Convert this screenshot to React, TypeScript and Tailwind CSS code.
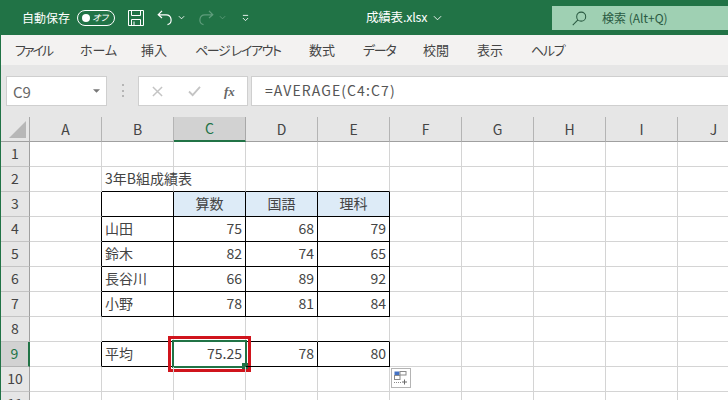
import React from 'react';

const columns = ['A', 'B', 'C', 'D', 'E', 'F', 'G', 'H', 'I', 'J'];
const rowNumbers = [1, 2, 3, 4, 5, 6, 7, 8, 9, 10, 11];

const values: Record<string, string> = {
  B2: '3年B組成績表',
  C3: '算数', D3: '国語', E3: '理科',
  B4: '山田', C4: '75', D4: '68', E4: '79',
  B5: '鈴木', C5: '82', D5: '74', E5: '65',
  B6: '長谷川', C6: '66', D6: '89', E6: '92',
  B7: '小野', C7: '78', D7: '81', E7: '84',
  B9: '平均', C9: '75.25', D9: '78', E9: '80',
};

const tabs = [
  { label: 'ファイル', className: 'w-[37px] tracking-[-2px]' },
  { label: 'ホーム', className: 'w-[33px]' },
  { label: '挿入', className: 'w-[26px]' },
  { label: 'ページ レイアウト', className: 'w-[86px] tracking-[-1.4px]' },
  { label: '数式', className: 'w-[26px]' },
  { label: 'データ', className: 'w-[32px] tracking-[-1.3px]' },
  { label: '校閲', className: 'w-[26px]' },
  { label: '表示', className: 'w-[26px]' },
  { label: 'ヘルプ', className: 'w-[32px] tracking-[-1.3px]' },
];

const inTable = (col: string, row: number) =>
  ['B', 'C', 'D', 'E'].includes(col) && ((row >= 3 && row <= 7) || row === 9);

const Cell: React.FC<{ col: string; row: number }> = ({ col, row }) => {
  const id = `${col}${row}`;
  const text = values[id];
  const next = columns[columns.indexOf(col) + 1];
  const blackRight = inTable(col, row) || (next ? inTable(next, row) : false);
  const blackBottom = inTable(col, row) || inTable(col, row + 1);
  const isHead = row === 3 && ['C', 'D', 'E'].includes(col);
  const isNumber = text !== undefined && /^[\d.]+$/.test(text);

  return (
    <div
      className={`relative flex items-center border-r border-b px-[3px] pb-[3px] whitespace-nowrap text-[14px] leading-none text-[#444] ${
        blackRight ? 'border-r-black' : 'border-r-[#d4d4d4]'
      } ${blackBottom ? 'border-b-black' : 'border-b-[#d4d4d4]'} ${isHead ? 'justify-center bg-[#ddebf7]' : ''} ${
        isNumber ? 'justify-end' : ''
      }`}
    >
      {text}
      {id === 'C9' && (
        <>
          <div className="absolute -top-[6px] -left-[6px] -right-[6px] -bottom-[6px] border-[3px] border-[#d0141c]" />
          <div className="absolute -top-[2px] -left-[2px] -right-[2px] -bottom-[2px] border-2 border-[#217346]" />
          <div className="absolute -right-[3px] -bottom-[3px] h-[6px] w-[6px] bg-[#217346]" />
        </>
      )}
      {id === 'F10' && (
        <div className="absolute top-[1px] left-[1px] z-10 h-[20px] w-[20px] border border-[#b4b4b4] bg-white p-[2px]">
          <svg viewBox="0 0 14 14" className="h-full w-full">
            <rect x="0.5" y="0.5" width="5" height="3.5" fill="#4472c4" />
            <rect x="6" y="0.5" width="6" height="3.5" fill="#fff" stroke="#8a8a8a" />
            <rect x="0.5" y="4.5" width="5.5" height="4" fill="#fff" stroke="#8a8a8a" />
            <path d="M0 11.5h7" stroke="#8a8a8a" strokeDasharray="1 1" />
            <path d="M10.5 8.5v5M8 11h5" stroke="#6a6a6a" />
          </svg>
        </div>
      )}
    </div>
  );
};

const App: React.FC = () => {
  return (
    <div className="h-[400px] w-[728px] overflow-hidden bg-white font-['Noto_Sans_CJK_JP','Noto_Sans',sans-serif]">
      {/* Title bar */}
      <div className="relative flex h-[35px] items-center bg-[#217346] text-white">
        <span className="ml-[22px] text-[12px]">自動保存</span>
        <div className="ml-[7px] flex h-[16px] w-[38px] items-center justify-between rounded-full border border-white pr-[6px] pl-[4px]">
          <span className="h-[8px] w-[8px] rounded-full bg-white" />
          <span className="text-[9px] leading-none italic [font-feature-settings:'palt']">オフ</span>
        </div>
        <svg viewBox="0 0 16 16" className="ml-[13px] h-[16px] w-[16px]" fill="none" stroke="#fff" strokeWidth="1">
          <path d="M.5.5h15v15H.5zM3.5.5v5h9v-5M3.5 15.5v-6h9v6M6 11.5v4" />
        </svg>
        <svg viewBox="0 0 16 16" className="ml-[13px] h-[16px] w-[16px]" fill="none" stroke="#fff" strokeWidth="1.2">
          <path d="M5 .8 1.2 4.8 5 8M1.2 4.8H9a5 5 0 0 1 1.5 9.8" />
        </svg>
        <svg viewBox="0 0 8 5" className="ml-[5px] h-[5px] w-[7px]" fill="none" stroke="#fff">
          <path d="m1 1 3 3 3-3" />
        </svg>
        <svg viewBox="0 0 16 16" className="ml-[13px] h-[16px] w-[16px]" fill="none" stroke="#5f9d7c" strokeWidth="1.2">
          <path d="M11 .8l3.8 4L11 8M14.8 4.8H7a5 5 0 0 0-1.5 9.8" />
        </svg>
        <svg viewBox="0 0 8 5" className="ml-[5px] h-[5px] w-[7px]" fill="none" stroke="#5f9d7c">
          <path d="m1 1 3 3 3-3" />
        </svg>
        <svg viewBox="0 0 8 8" className="ml-[16px] h-[8px] w-[7px]" fill="none" stroke="#fff">
          <path d="M1 1h6M1 4l3 3 3-3" />
        </svg>
        <div className="ml-[117px] flex items-center">
          <span className="text-[12.5px] tracking-[-0.2px]">成績表.xlsx</span>
          <svg viewBox="0 0 10 6" className="ml-[6px] h-[6px] w-[9px]" fill="none" stroke="#fff">
            <path d="m1 1 4 4 4-4" />
          </svg>
        </div>
        <div className="absolute top-[6px] right-0 flex h-[24px] w-[176px] items-center bg-[#9fd0b3] pl-[20px] text-[#2a5a42]">
          <svg viewBox="0 0 16 16" className="h-[15px] w-[15px]" fill="none" stroke="#2a5a42" strokeWidth="1.1">
            <circle cx="9.8" cy="6" r="4.8" />
            <path d="M6.3 9.5.8 15" />
          </svg>
          <span className="ml-[15px] text-[12px]">検索 (Alt+Q)</span>
        </div>
      </div>

      <div className="border-l border-l-[#217346]">
        {/* Ribbon tabs */}
        <div className="flex h-[30px] items-center gap-[28px] bg-[#f3f2f1] pl-[14px] text-[13px] text-[#444] [font-feature-settings:'palt']">
          {tabs.map((tab) => (
            <span key={tab.label} className={`whitespace-nowrap ${tab.className}`}>
              {tab.label}
            </span>
          ))}
        </div>

        {/* Formula bar */}
        <div className="flex h-[52px] items-start bg-[#e6e6e6] pt-[11px] pl-[5px]">
          <div className="flex h-[30px] w-[101px] items-center justify-between border border-[#cfcfcf] bg-white pr-[6px] pl-[6px] text-[15px] text-[#666]">
            <span className="mt-[3px]">C9</span>
            <svg viewBox="0 0 8 4" className="h-[4px] w-[7px]">
              <path d="M0 0h8L4 4z" fill="#777" />
            </svg>
          </div>
          <div className="ml-[15px] mt-[8px] flex h-[13px] w-[2px] flex-col justify-between">
            <span className="h-[2px] w-[2px] bg-[#b5b5b5]" />
            <span className="h-[2px] w-[2px] bg-[#b5b5b5]" />
            <span className="h-[2px] w-[2px] bg-[#b5b5b5]" />
          </div>
          <div className="ml-[14px] flex h-[30px] w-[110px] items-center border border-[#cfcfcf] bg-white pl-[13px]">
            <svg viewBox="0 0 12 12" className="h-[11px] w-[11px]" fill="none" stroke="#c4c4c4" strokeWidth="1.6">
              <path d="m1 1 10 10M11 1 1 11" />
            </svg>
            <svg viewBox="0 0 14 12" className="ml-[25px] h-[11px] w-[13px]" fill="none" stroke="#c4c4c4" strokeWidth="2">
              <path d="m1 6 4 4 8-9" />
            </svg>
            <span className="ml-[23px] font-['Liberation_Serif',serif] text-[13px] font-bold italic leading-none text-[#666]">fx</span>
          </div>
          <div className="ml-[3px] flex h-[30px] flex-1 items-center border border-r-0 border-[#cfcfcf] bg-white pb-[1px] pl-[13px] text-[14px] tracking-[1.1px] text-[#555]">
            =AVERAGE(C4:C7)
          </div>
        </div>

        {/* Sheet */}
        <div className="grid grid-cols-[29px_repeat(10,72px)] grid-rows-[25px_repeat(11,25px)] overflow-hidden">
          <div className="flex items-end justify-end border-r border-b border-r-[#a8a8a8] border-b-[#a0a0a0] bg-[#e6e6e6] pr-[3px] pb-[3px]">
            <svg viewBox="0 0 17 17" className="h-[17px] w-[17px]">
              <path d="M17 0v17H0z" fill="#b7b7b7" />
            </svg>
          </div>
          {columns.map((col) => (
            <div
              key={col}
              className={`flex items-center justify-center text-[14px] ${
                col === 'C'
                  ? 'border-r border-b-2 border-r-[#a8a8a8] border-b-[#217346] bg-[#d2d2d2] text-[#217346]'
                  : 'border-r border-b border-r-[#b4b4b4] border-b-[#a0a0a0] bg-[#e6e6e6] text-[#444]'
              }`}
            >
              {col}
            </div>
          ))}
          {rowNumbers.map((row) => (
            <React.Fragment key={row}>
              <div
                className={`flex items-center justify-center border-b pb-[1px] text-[14px] ${
                  row === 9
                    ? 'border-r-2 border-r-[#217346] border-b-[#b4b4b4] bg-[#d2d2d2] text-[#217346]'
                    : 'border-r border-r-[#a0a0a0] border-b-[#c4c4c4] bg-[#e6e6e6] text-[#444]'
                }`}
              >
                {row}
              </div>
              {columns.map((col) => (
                <Cell key={col} col={col} row={row} />
              ))}
            </React.Fragment>
          ))}
        </div>
      </div>
    </div>
  );
};

export default App;
